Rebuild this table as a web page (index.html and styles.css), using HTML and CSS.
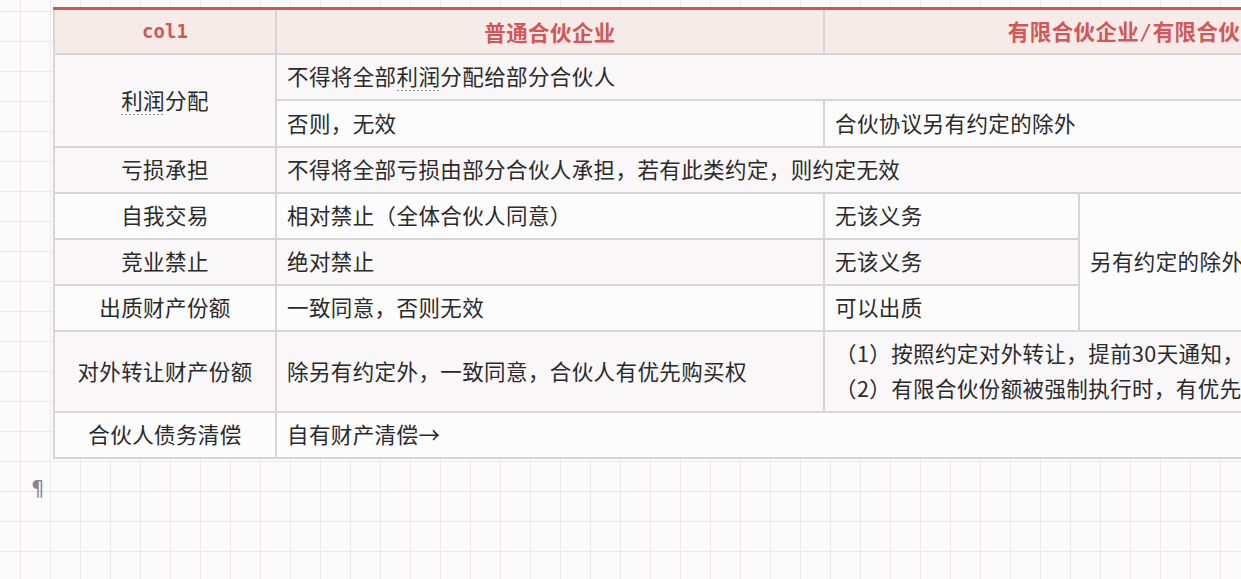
FILE: index.html
```html
<!DOCTYPE html>
<html lang="zh-CN">
<head>
<meta charset="utf-8">
<title>合伙企业对比</title>
<link rel="stylesheet" href="styles.css">
</head>
<body>
<div class="page">
  <table class="cmp">
    <colgroup>
      <col class="c1">
      <col class="c2">
      <col class="c3">
      <col class="c4">
    </colgroup>
    <thead>
      <tr>
        <th class="mono">col1</th>
        <th>普通合伙企业</th>
        <th colspan="2">有限合伙企业<span class="slash">/</span>有限合伙人</th>
      </tr>
    </thead>
    <tbody>
      <tr class="dark">
        <td class="label" rowspan="2"><span class="dash">利润</span>分配</td>
        <td colspan="3">不得将全部<span class="dash">利润</span>分配给部分合伙人</td>
      </tr>
      <tr class="light tall">
        <td>否则，无效</td>
        <td colspan="2">合伙协议另有约定的除外</td>
      </tr>
      <tr class="dark">
        <td class="label">亏损承担</td>
        <td colspan="3">不得将全部亏损由部分合伙人承担，若有此类约定，则约定无效</td>
      </tr>
      <tr class="light">
        <td class="label">自我交易</td>
        <td>相对禁止（全体合伙人同意）</td>
        <td>无该义务</td>
        <td class="nowrap" rowspan="3">另有约定的除外</td>
      </tr>
      <tr class="dark">
        <td class="label">竞业禁止</td>
        <td>绝对禁止</td>
        <td>无该义务</td>
      </tr>
      <tr class="light">
        <td class="label">出质财产份额</td>
        <td>一致同意，否则无效</td>
        <td>可以出质</td>
      </tr>
      <tr class="dark">
        <td class="label">对外转让财产份额</td>
        <td>除另有约定外，一致同意，合伙人有优先购买权</td>
        <td class="nowrap" colspan="2">（1）按照约定对外转让，提前30天通知，无需一致同意<br>（2）有限合伙份额被强制执行时，有优先购买权</td>
      </tr>
      <tr class="light">
        <td class="label">合伙人债务清偿</td>
        <td colspan="3">自有财产清偿→</td>
      </tr>
    </tbody>
  </table>
  <p class="pilcrow">¶</p>
</div>
</body>
</html>
```

FILE: styles.css
```css
html, body {
  margin: 0;
  padding: 0;
  overflow: hidden;
  width: 1241px;
  height: 579px;
}

body {
  background-color: #fcfbfb;
  background-image:
    linear-gradient(to right, #efe8eb 1px, transparent 1px),
    linear-gradient(to bottom, #efe8eb 1px, transparent 1px);
  background-size: 30px 30px;
  background-position: 20px 11px;
  font-family: "Noto Sans CJK SC", "Noto Sans", sans-serif;
  color: #2a2a2a;
}

.page {
  padding-top: 7px;
}

.cmp {
  margin-left: 53px;
  border-collapse: collapse;
  table-layout: fixed;
  width: 1392px;
  font-size: 21.5px;
  letter-spacing: 0.4px;
}

.c1 { width: 222px; }
.c2 { width: 548px; }
.c3 { width: 255px; }
.c4 { width: 367px; }

.cmp th {
  background: #f7ebe9;
  color: #d05858;
  font-weight: 600;
  height: 43px;
  padding: 0;
  line-height: 41px;
  text-align: center;
  border: 2px solid #d6d6d6;
  border-top: 3px solid #cd5656;
  white-space: nowrap;
  overflow: hidden;
}

.cmp th.mono {
  font-family: "DejaVu Sans Mono", "Liberation Mono", monospace;
  font-size: 19px;
  font-weight: 700;
  letter-spacing: 0;
}

.slash {
  font-family: "DejaVu Sans Mono", monospace;
  font-weight: 400;
}

.cmp td {
  border: 2px solid #d6d6d6;
  padding: 3px 10px 6px;
  line-height: 35px;
  vertical-align: middle;
  text-align: left;
}

.cmp .tall td {
  padding-top: 4px;
}

.cmp td.label {
  text-align: center;
  padding-left: 4px;
  padding-right: 4px;
}

.cmp td.nowrap {
  white-space: nowrap;
  overflow: hidden;
}

.dark td { background: #f9f7f8; }
.light td { background: #fdfcfc; }

.dash {
  background-image: repeating-linear-gradient(to right, #8e8e8e 0 2px, transparent 2px 4px);
  background-size: 100% 1px;
  background-position: left bottom;
  background-repeat: no-repeat;
}

.pilcrow {
  margin: 18px 0 0 31px;
  font-family: "DejaVu Sans", sans-serif;
  font-size: 21px;
  line-height: 24px;
  color: #8b8190;
}
```
